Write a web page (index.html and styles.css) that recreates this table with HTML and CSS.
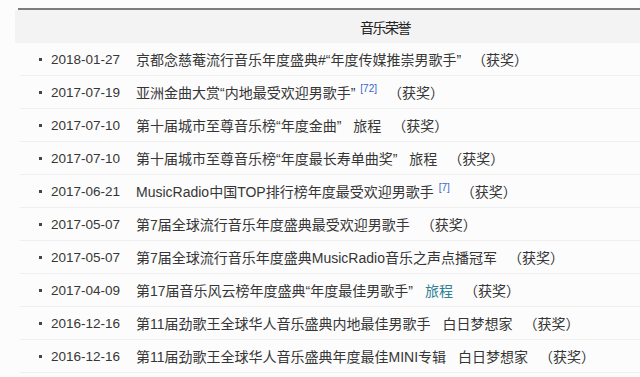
FILE: index.html
```html
<!DOCTYPE html>
<html lang="zh">
<head>
<meta charset="utf-8">
<title>音乐荣誉</title>
<link rel="stylesheet" href="styles.css">
</head>
<body>
<div class="panel">
  <div class="head"><span class="title">音乐荣誉</span></div>
  <ul class="list">
    <li class="row"><span class="date">2018-01-27</span><span class="txt">京都念慈菴流行音乐年度盛典#“年度传媒推崇男歌手”</span><span class="award">（获奖）</span></li>
    <li class="row"><span class="date">2017-07-19</span><span class="txt">亚洲金曲大赏“内地最受欢迎男歌手”<sup class="ref">[72]</sup></span><span class="award">（获奖）</span></li>
    <li class="row"><span class="date">2017-07-10</span><span class="txt">第十届城市至尊音乐榜“年度金曲”</span><span class="work">旅程</span><span class="award">（获奖）</span></li>
    <li class="row"><span class="date">2017-07-10</span><span class="txt">第十届城市至尊音乐榜“年度最长寿单曲奖”</span><span class="work">旅程</span><span class="award">（获奖）</span></li>
    <li class="row"><span class="date">2017-06-21</span><span class="txt">MusicRadio中国TOP排行榜年度最受欢迎男歌手<sup class="ref">[7]</sup></span><span class="award">（获奖）</span></li>
    <li class="row"><span class="date">2017-05-07</span><span class="txt">第7届全球流行音乐年度盛典最受欢迎男歌手</span><span class="award">（获奖）</span></li>
    <li class="row"><span class="date">2017-05-07</span><span class="txt">第7届全球流行音乐年度盛典MusicRadio音乐之声点播冠军</span><span class="award">（获奖）</span></li>
    <li class="row"><span class="date">2017-04-09</span><span class="txt">第17届音乐风云榜年度盛典“年度最佳男歌手”</span><span class="work link">旅程</span><span class="award">（获奖）</span></li>
    <li class="row"><span class="date">2016-12-16</span><span class="txt">第11届劲歌王全球华人音乐盛典内地最佳男歌手</span><span class="work">白日梦想家</span><span class="award">（获奖）</span></li>
    <li class="row"><span class="date">2016-12-16</span><span class="txt">第11届劲歌王全球华人音乐盛典年度最佳MINI专辑</span><span class="work">白日梦想家</span><span class="award">（获奖）</span></li>
  </ul>
</div>
</body>
</html>
```

FILE: styles.css
```css
html, body {
  margin: 0;
  padding: 0;
  background: #fcfcfc;
}
body {
  font-family: "Liberation Sans", "Noto Sans CJK SC", sans-serif;
  color: #363636;
  font-size: 14px;
  padding-top: 8px;
  overflow: hidden;
}
.panel {
  margin-left: 18px;
  border-top: 2px solid #7d7d7d;
}
.head {
  height: 33px;
  background: #f3f3f3;
  display: flex;
  align-items: center;
  margin-left: -3px;
}
.title {
  margin-left: 345px;
  font-size: 14px;
  letter-spacing: -1.5px;
  color: #222;
}
.list {
  list-style: none;
  margin: 0;
  padding: 0;
}
.row {
  height: 32px;
  border-bottom: 1px solid #efefef;
  display: flex;
  align-items: center;
  white-space: nowrap;
  margin-left: 2px;
}
.row::before {
  content: "";
  width: 3px;
  height: 3px;
  background: #444;
  margin-left: 19px;
  margin-right: 9px;
}
.date {
  width: 85px;
  flex: none;
  font-size: 13.5px;
}
.ref {
  color: #3366cc;
  font-size: 10px;
  vertical-align: 6px;
  margin-left: 5px;
}
.work {
  margin-left: 12px;
}
.link {
  color: #2e7f93;
}
.award {
  margin-left: 11px;
}
```
